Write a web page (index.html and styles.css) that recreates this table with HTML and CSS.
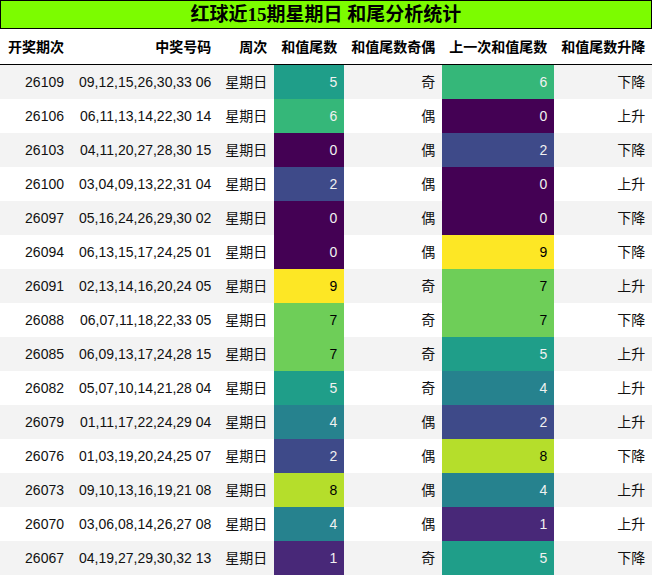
FILE: index.html
```html
<!DOCTYPE html>
<html lang="zh">
<head>
<meta charset="utf-8">
<title>红球近15期星期日 和尾分析统计</title>
<link rel="stylesheet" href="styles.css">
</head>
<body>
<div class="title">红球近15期星期日 和尾分析统计</div>
<table class="stats">
<thead>
<tr><th>开奖期次</th><th>中奖号码</th><th>周次</th><th>和值尾数</th><th>和值尾数奇偶</th><th>上一次和值尾数</th><th>和值尾数升降</th></tr>
</thead>
<tbody>
<tr><td>26109</td><td>09,12,15,26,30,33 06</td><td>星期日</td><td class="v5">5</td><td>奇</td><td class="v6">6</td><td>下降</td></tr>
<tr><td>26106</td><td>06,11,13,14,22,30 14</td><td>星期日</td><td class="v6">6</td><td>偶</td><td class="v0">0</td><td>上升</td></tr>
<tr><td>26103</td><td>04,11,20,27,28,30 15</td><td>星期日</td><td class="v0">0</td><td>偶</td><td class="v2">2</td><td>下降</td></tr>
<tr><td>26100</td><td>03,04,09,13,22,31 04</td><td>星期日</td><td class="v2">2</td><td>偶</td><td class="v0">0</td><td>上升</td></tr>
<tr><td>26097</td><td>05,16,24,26,29,30 02</td><td>星期日</td><td class="v0">0</td><td>偶</td><td class="v0">0</td><td>下降</td></tr>
<tr><td>26094</td><td>06,13,15,17,24,25 01</td><td>星期日</td><td class="v0">0</td><td>偶</td><td class="v9">9</td><td>下降</td></tr>
<tr><td>26091</td><td>02,13,14,16,20,24 05</td><td>星期日</td><td class="v9">9</td><td>奇</td><td class="v7">7</td><td>上升</td></tr>
<tr><td>26088</td><td>06,07,11,18,22,33 05</td><td>星期日</td><td class="v7">7</td><td>奇</td><td class="v7">7</td><td>下降</td></tr>
<tr><td>26085</td><td>06,09,13,17,24,28 15</td><td>星期日</td><td class="v7">7</td><td>奇</td><td class="v5">5</td><td>上升</td></tr>
<tr><td>26082</td><td>05,07,10,14,21,28 04</td><td>星期日</td><td class="v5">5</td><td>奇</td><td class="v4">4</td><td>上升</td></tr>
<tr><td>26079</td><td>01,11,17,22,24,29 04</td><td>星期日</td><td class="v4">4</td><td>偶</td><td class="v2">2</td><td>上升</td></tr>
<tr><td>26076</td><td>01,03,19,20,24,25 07</td><td>星期日</td><td class="v2">2</td><td>偶</td><td class="v8">8</td><td>下降</td></tr>
<tr><td>26073</td><td>09,10,13,16,19,21 08</td><td>星期日</td><td class="v8">8</td><td>偶</td><td class="v4">4</td><td>上升</td></tr>
<tr><td>26070</td><td>03,06,08,14,26,27 08</td><td>星期日</td><td class="v4">4</td><td>偶</td><td class="v1">1</td><td>上升</td></tr>
<tr><td>26067</td><td>04,19,27,29,30,32 13</td><td>星期日</td><td class="v1">1</td><td>奇</td><td class="v5">5</td><td>下降</td></tr>
</tbody>
</table>
</body>
</html>
```

FILE: styles.css
```css
html, body {
  margin: 0;
  padding: 0;
  background: #ffffff;
}

.title {
  box-sizing: border-box;
  width: 652px;
  height: 29px;
  border: 1px solid #000;
  background: #7cfc00;
  color: #000;
  text-align: center;
  font-family: "Liberation Serif", "Noto Sans CJK SC", serif;
  font-weight: bold;
  font-size: 19px;
  line-height: 27px;
}

.stats {
  width: 652px;
  border-collapse: collapse;
  border-spacing: 0;
  font-family: "Liberation Sans", "Noto Sans CJK SC", sans-serif;
  font-size: 14px;
  color: #000;
}

.stats th,
.stats td {
  padding: 7px 7px;
  line-height: 20px;
  text-align: right;
  white-space: nowrap;
}

.stats th {
  padding-top: 8px;
  font-weight: bold;
  border-bottom: 1px solid #000;
  background: #fff;
}

.stats th:first-child,
.stats td:first-child {
  padding-left: 8px;
  padding-right: 8px;
}

.stats th:last-child,
.stats td:last-child {
  padding-right: 8px;
}

.stats td {
  color: #111;
}

.stats tbody tr:nth-child(odd) {
  background: #f3f3f3;
}

.stats tbody tr:nth-child(even) {
  background: #ffffff;
}

.v0 { background: #440154; color: #f1f1f1 !important; }
.v1 { background: #482878; color: #f1f1f1 !important; }
.v2 { background: #3e4a89; color: #f1f1f1 !important; }
.v4 { background: #26828e; color: #f1f1f1 !important; }
.v5 { background: #1f9e89; color: #f1f1f1 !important; }
.v6 { background: #35b779; color: #f1f1f1 !important; }
.v7 { background: #6ece58; color: #000 !important; }
.v8 { background: #b5de2b; color: #000 !important; }
.v9 { background: #fde725; color: #000 !important; }
```
